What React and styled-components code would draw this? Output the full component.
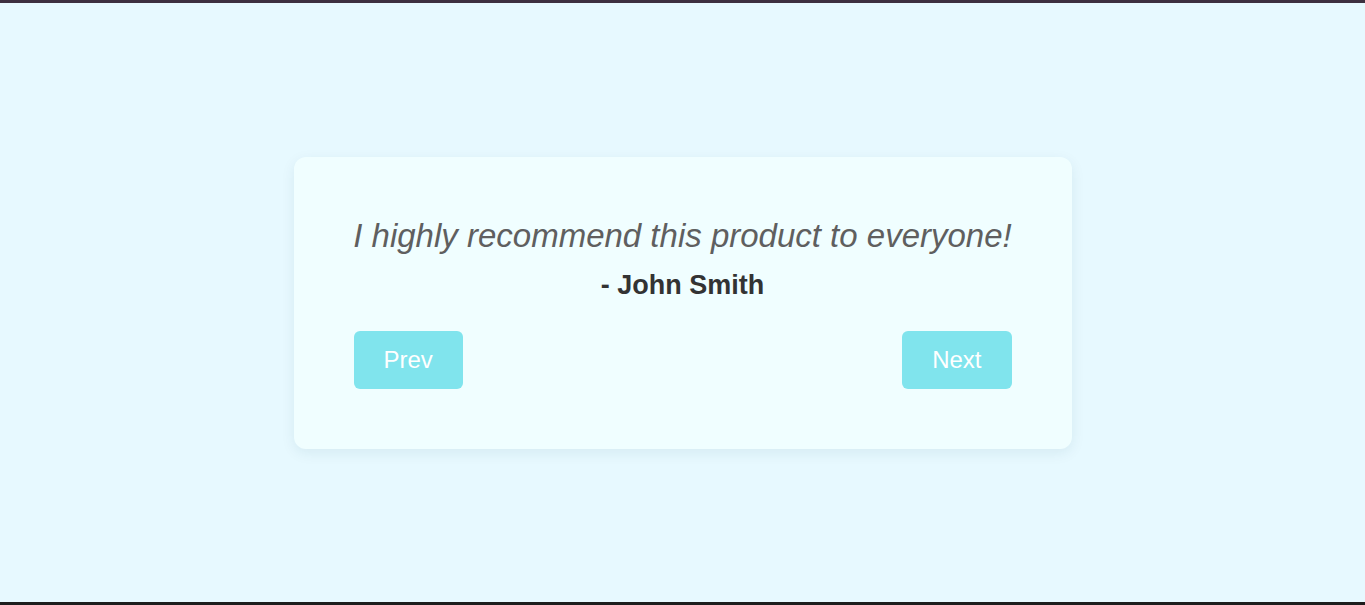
import React, { useState } from 'react';
import styled, { createGlobalStyle } from 'styled-components';

const GlobalStyle = createGlobalStyle`
  html, body {
    margin: 0;
    padding: 0;
  }
  body {
    font-family: "Liberation Sans", Arial, sans-serif;
    background: #e7f9ff;
  }
`;

const Page = styled.div`
  box-sizing: border-box;
  height: 100vh;
  border-top: 3px solid #3d3040;
  border-bottom: 3px solid #1d1d1d;
  display: flex;
  align-items: center;
  justify-content: center;
  background: #e7f9ff;
`;

const Card = styled.div`
  box-sizing: border-box;
  width: 778px;
  padding: 60px;
  background: #f0feff;
  border-radius: 12px;
  box-shadow: 0 4px 14px rgba(0, 60, 90, 0.08);
  text-align: center;
`;

const Quote = styled.p`
  margin: 0 -10px;
  font-size: 33px;
  line-height: 38px;
  font-style: italic;
  color: #5f5f5f;
  white-space: nowrap;
`;

const Author = styled.p`
  margin: 15px 0 0;
  font-size: 27px;
  line-height: 31px;
  font-weight: bold;
  color: #333333;
`;

const Controls = styled.div`
  display: flex;
  justify-content: space-between;
  margin-top: 30px;
`;

const NavButton = styled.button`
  border: none;
  border-radius: 6px;
  background: #80e4ed;
  color: #ffffff;
  font-family: "Liberation Sans", Arial, sans-serif;
  font-size: 24px;
  line-height: 28px;
  padding: 15px 30px;
  cursor: pointer;
`;

const testimonials = [
  { quote: 'I highly recommend this product to everyone!', author: 'John Smith' },
  { quote: 'Great service and friendly support.', author: 'Jane Doe' },
];

function App() {
  const [index, setIndex] = useState(0);
  const item = testimonials[index];
  const step = d => setIndex((index + d + testimonials.length) % testimonials.length);

  return (
    <Page>
      <GlobalStyle />
      <Card>
        <Quote>{item.quote}</Quote>
        <Author>- {item.author}</Author>
        <Controls>
          <NavButton onClick={() => step(-1)}>Prev</NavButton>
          <NavButton onClick={() => step(1)}>Next</NavButton>
        </Controls>
      </Card>
    </Page>
  );
}

export default App;
